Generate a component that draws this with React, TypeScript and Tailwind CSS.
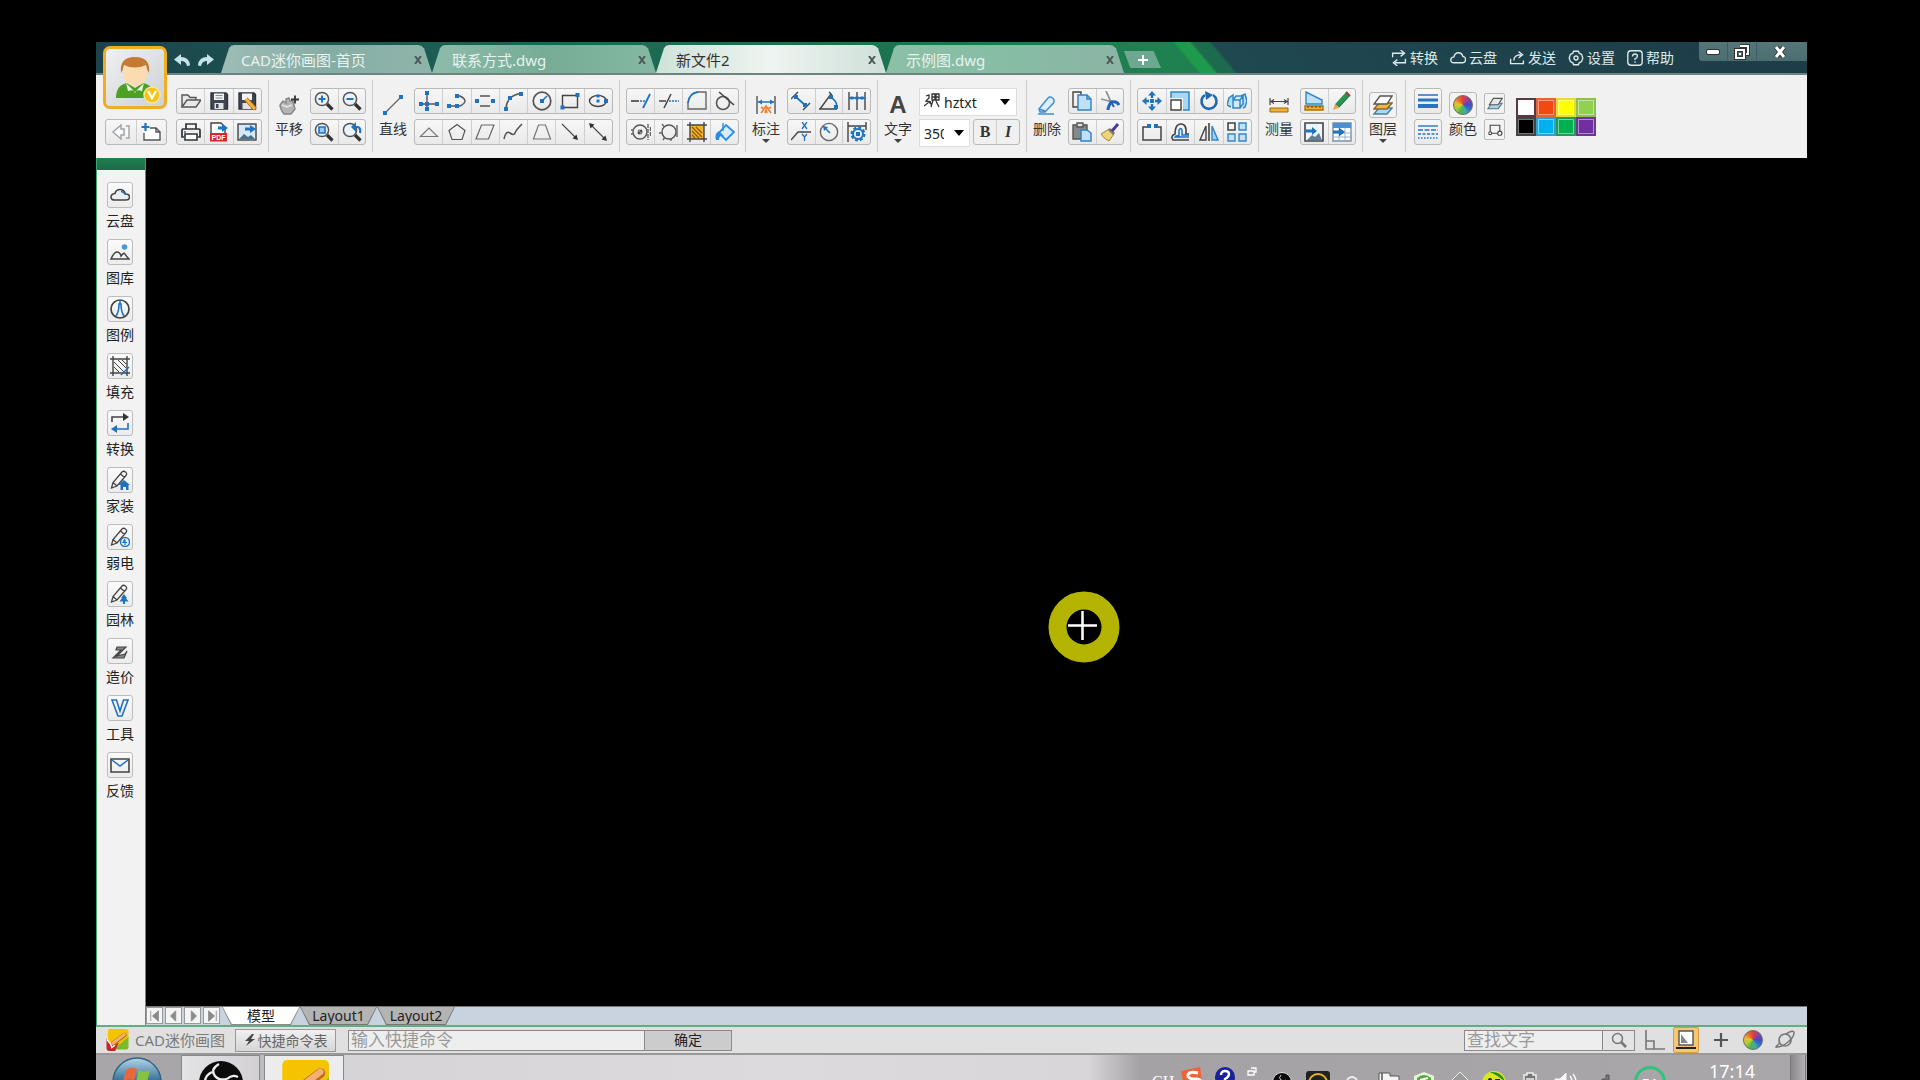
import React from 'react';

/* ==========================================================================
   Drawing editor window
   Title bar with file tabs, ribbon, side bar, canvas, status bar and taskbar
   ========================================================================== */

const BLUE = '#1f72c0';
const DARK = '#444444';

type Children = { children?: React.ReactNode };

function Ico({ children, className = 'w-5 h-5' }: Children & { className?: string }) {
  return (
    <svg className={`${className} shrink-0`} viewBox="0 0 20 20" fill="none" stroke={DARK} strokeWidth={1.4} aria-hidden="true">
      {children}
    </svg>
  );
}

// Square grip drawn at the ends of the geometry icons
function Dot({ x, y, s = 4 }: { x: number; y: number; s?: number }) {
  return <rect x={x - s / 2} y={y - s / 2} width={s} height={s} fill={BLUE} stroke="none" />;
}

function ColorWheel({ className = 'w-5 h-5' }: { className?: string }) {
  return (
    <span
      className={`${className} block rounded-full border border-[#6b6b6b] bg-[conic-gradient(#e0403a,#a03a9c,#4a4ab8,#2f6ad0,#3fb0a0,#4cb648,#a8cc3c,#f0c030,#e0702c,#e0403a)]`}
    />
  );
}

// ==========================================================================
// Icons
// ==========================================================================

const magnifier = (
  <>
    <path d="M13 13l5.5 5.5" stroke="#333" strokeWidth={3.2} />
    <circle cx="8" cy="8" r="6.6" fill="#eaf3fb" stroke="#555" strokeWidth={1.5} />
  </>
);

const pencil = <path d="M1.5 18l1.5-5.500L12 2q1.500-1.500 3.500 0t.5 3.500L7 16zM3 12.500L7 16M10.500 4l4 3.500" strokeWidth={1.3} />;

const frameHatch = (
  <>
    <rect x="3" y="3" width="14" height="14" fill="#f2b32c" stroke="none" />
    <path d="M5 9l7 7M5 5l10 10M9 5l6 6M5 13l3 3" stroke="#8a5c00" strokeWidth={1.2} />
    <path d="M3 0v20M17 0v20M0 3h20M0 17h20" strokeWidth={1.4} />
  </>
);

const icons = {
  back: <path d="M10 3L2 10l8 7v-4h3V7h-3zM15 4h3v12h-3" stroke="#9aa2a8" fill="#fafafa" />,
  newFile: (
    <>
      <path d="M9 6h6l4 4v8H3v-7M15 6v4h4" stroke="#555" fill="#fff" />
      <path d="M4.5 1v8M.5 5h8" stroke={BLUE} strokeWidth={2.2} />
    </>
  ),
  open: <path d="M1 16V4h6l2 2.5h6V9M1 16l5-7h14l-5 7z" stroke="#555" fill="#e6e8ea" />,
  save: (
    <>
      <path d="M2 2h15l1.5 1.5V18H2z" fill="#3f4650" stroke="#30353d" />
      <path d="M5 2.5h10V9H5z" fill="#f4f4f4" stroke="none" />
      <path d="M6.5 4.5h7M6.5 7h7" stroke="#888" strokeWidth={1} />
      <path d="M5.5 12h9v6h-9z" fill="#dfe3e6" stroke="none" />
      <path d="M7 13h2.5v4H7z" fill="#3f4650" stroke="none" />
    </>
  ),
  saveAs: (
    <>
      <path d="M2 2h15l1.5 1.5V18H2z" fill="#3f4650" stroke="#30353d" />
      <path d="M5 2.5h10V9H5z" fill="#f4f4f4" stroke="none" />
      <path d="M5.5 12h9v6h-9z" fill="#dfe3e6" stroke="none" />
      <path d="M9 8l9 10" stroke="#b66b1c" strokeWidth={4.5} />
      <path d="M9 8l9 10" stroke="#f5b43c" strokeWidth={2.8} />
    </>
  ),
  print: (
    <>
      <path d="M5 7V2h10v5M3 15H1V8q0-1 1-1h16q1 0 1 1v7h-2" strokeWidth={1.7} stroke="#333" />
      <path d="M4 12h12v6H4z" fill="#fff" stroke="#333" strokeWidth={1.6} />
      <path d="M3 10h2" stroke={BLUE} />
    </>
  ),
  pdf: (
    <>
      <path d="M2 11V1h10l4 4v6" fill="#fff" />
      <path d="M9 6h5" stroke={BLUE} strokeWidth={3} />
      <path d="M13 2l6 4-6 4z" fill={BLUE} stroke="none" />
      <rect x="1" y="11" width="17" height="8.5" fill="#d9262c" stroke="none" />
      <text x="9.5" y="18" textAnchor="middle" fill="#fff" stroke="none" fontSize="7" fontWeight="700" fontFamily="Liberation Sans, sans-serif">PDF</text>
    </>
  ),
  image: (
    <>
      <rect x="1" y="2" width="18" height="16" fill="#d6e8f6" />
      <path d="M2 17l5-5 4 3 3-2 4 4z" fill="#4a6f90" stroke="none" />
      <path d="M8 7h6" stroke={BLUE} strokeWidth={3} />
      <path d="M13 3l6 4-6 4z" fill={BLUE} stroke="none" />
    </>
  ),
  pan: (
    <>
      <path d="M5 19q-4-5-4-9l3-4 3 2V4l3-1 1 3 3 0 1 4 1 4-4 5z" fill="#b4b4b4" stroke="#868686" />
      <path d="M3 10l5 2 5-2" stroke="#e6e6e6" />
      <path d="M16 .5v8M12 4.5h8" stroke="#333" strokeWidth={1.8} />
    </>
  ),
  zoomIn: <>{magnifier}<path d="M8 4.5v7M4.5 8h7" stroke={BLUE} strokeWidth={2} /></>,
  zoomOut: <>{magnifier}<path d="M4.5 8h7" stroke={BLUE} strokeWidth={2} /></>,
  zoomWindow: <>{magnifier}<path d="M5 5h6v6H5z" stroke={BLUE} fill="#9dcbf0" strokeWidth={1.6} /></>,
  zoomPrev: (
    <>
      {magnifier}
      <path d="M13 5h3q3 1 2 6" stroke={BLUE} strokeWidth={2.2} />
      <path d="M14 0v10L9 5z" fill={BLUE} stroke="none" />
    </>
  ),
  line: <><path d="M2 18L18 2" stroke="#666" strokeWidth={1.2} /><Dot x={2} y={18} /><Dot x={18} y={2} /></>,
  cross: <><path d="M8 1v18M1 13h18" stroke="#555" /><Dot x={8} y={2} /><Dot x={2} y={13} /><Dot x={8} y={13} /><Dot x={8} y={18} /><Dot x={18} y={13} /></>,
  polyline: <><path d="M2 15h11q10-5 0-10H10" stroke="#555" /><Dot x={2} y={15} /><Dot x={10} y={15} /><Dot x={10} y={5} /></>,
  doubleLine: <><path d="M5 5h10M5 15h10" stroke="#555" /><Dot x={2} y={10} /><Dot x={18} y={10} /></>,
  arc: <><path d="M3 17Q4 5 17 2.5" stroke="#555" /><Dot x={3} y={18} /><Dot x={7} y={7} /><Dot x={18} y={3} /></>,
  circle: <><circle cx="10" cy="10" r="8.8" stroke="#555" strokeWidth={1.7} /><path d="M10 10l5-5" stroke={BLUE} strokeWidth={1.6} /><Dot x={10} y={10} /></>,
  rect: <><path d="M2.5 4.5h15v12h-15z" stroke="#444" /><Dot x={17.5} y={4} /><Dot x={2.5} y={16.5} /></>,
  ellipse: <><ellipse cx="10" cy="10" rx="8.5" ry="5.5" /><Dot x={10} y={5} s={3} /><Dot x={10} y={10} s={3} /><Dot x={18} y={10} /></>,
  triangle: <path d="M1.5 14.5L10 6l8.5 8.5z" stroke="#777" strokeWidth={1.2} />,
  pentagon: <path d="M10 2.5l8 6-3 9H5l-3-9z" stroke="#555" strokeWidth={1.2} />,
  parallelogram: <path d="M6.5 3H19l-5.5 14H1z" stroke="#666" strokeWidth={1.2} />,
  spline: <path d="M1 17q2-9 6-6t5 0T19 2" stroke="#555" strokeWidth={1.6} />,
  trapezoid: <path d="M6.5 3h7l5 14h-17z" stroke="#777" strokeWidth={1.2} />,
  arrow: <><path d="M2 2l14 14" strokeWidth={1.1} /><path d="M18 18l-1.5-5.5-4 4z" fill="#333" stroke="none" /></>,
  doubleArrow: <><path d="M3 3l14 14" strokeWidth={1.1} /><path d="M1 1l5.5 1.5-4 4zM19 19l-1.5-5.5-4 4z" fill="#333" stroke="none" /></>,
  extend: <><path d="M0 10h8" strokeWidth={1.6} /><path d="M9 10h6" stroke={BLUE} strokeDasharray="2 1" /><path d="M12 17l7-14" stroke={BLUE} strokeWidth={1.8} /></>,
  trim: <><path d="M0 10h7M5 17l7-14" strokeWidth={1.5} /><path d="M10 10h10" stroke={BLUE} strokeDasharray="2 1" /></>,
  fillet: <><path d="M10 1h9v17H1v-7" stroke="#666" /><path d="M1 12Q2 2 11 1" stroke={BLUE} strokeWidth={1.8} /></>,
  tangent: <><circle cx="8" cy="12" r="6.5" strokeWidth={1.6} stroke="#555" /><path d="M4 1l15 13" strokeWidth={1.6} /></>,
  circleCenter: (
    <>
      <circle cx="9" cy="10" r="7" stroke="#555" />
      <path d="M17 2v16M19.500 5v10M0 8h3M0 12h3" strokeDasharray="4 1" stroke="#666" />
      <path d="M7 12l4-4" />
      <circle cx="9" cy="10" r="2" strokeWidth={1} />
    </>
  ),
  circleTangent: <><circle cx="10" cy="10" r="7" stroke="#555" /><path d="M3 2l2.5 3M0 11h3M18 3v12M4 18l2-3M12 19v-2" stroke="#666" /></>,
  hatch: frameHatch,
  bucket: (
    <>
      <path d="M11 3l8 7-8 8-7-7z" fill="#d4ecfb" stroke="#2b8be0" strokeWidth={1.8} />
      <path d="M1 18q-2-6 3-9l5 5q-5-1-5 4z" fill="#2b8be0" stroke="none" />
      <path d="M8 1v8" stroke="#2b8be0" />
    </>
  ),
  dimension: (
    <>
      <path d="M1 1v18M19 1v18" stroke="#666" strokeWidth={1.6} />
      <path d="M2 7h16" stroke={BLUE} strokeWidth={1.5} />
      <path d="M2 7l4-2.5v5zM18 7l-4-2.5v5z" fill={BLUE} stroke="none" />
      <path d="M5 18l3-4 2-3 2 3 3 4M9 18l1-3 1 3M5 12l3 2M15 12l-3 2" stroke="#f08030" strokeWidth={1.7} />
    </>
  ),
  dimAligned: <><path d="M0 8l7-7M12 19l7-7" /><path d="M5 6l9 8" stroke={BLUE} strokeWidth={1.8} /><Dot x={5} y={6} /><Dot x={14} y={14} /></>,
  dimAngle: <><path d="M0 18h18M1 18L12 3M10 1l3 3" /><path d="M11 6q7 3 7 11" stroke={BLUE} strokeWidth={1.6} /><Dot x={12} y={6} /><Dot x={17} y={16} /></>,
  dimContinue: <><path d="M2 1v18M10 1v18M18 1v18" /><path d="M2 7h16" stroke={BLUE} strokeWidth={1.8} /><Dot x={5} y={7} s={3} /><Dot x={10} y={7} s={3} /><Dot x={15} y={7} s={3} /></>,
  dimXY: (
    <>
      <path d="M0 18l7-8h13" />
      <path d="M11 0l5 7M16 0l-5 7M11 12l2.5 3L16 12M13.5 15v4" stroke={BLUE} strokeWidth={1.3} />
    </>
  ),
  dimRadius: <><circle cx="10" cy="10" r="8.6" stroke="#666" /><path d="M6 6l5 5" stroke={BLUE} strokeWidth={1.6} /><path d="M4 4l5 1-4 4z" fill={BLUE} stroke="none" /></>,
  dimStyle: (
    <>
      <path d="M1 0v20M19 0v8M1 4h18" />
      <circle cx="11" cy="12" r="6.5" stroke={BLUE} strokeWidth={2} strokeDasharray="3 2" />
      <circle cx="11" cy="12" r="5" fill="#e6f2fb" stroke={BLUE} strokeWidth={2} />
      <Dot x={11} y={12} />
    </>
  ),
  eraser: <path d="M2 14L11 3q2-2 4.5 0t1 5L8 17H3zM2 14l6 2M1 19h16" stroke="#3c8ed4" fill="#dceefb" strokeWidth={1.5} />,
  copy: (
    <>
      <path d="M7 16H1V1h8v3" />
      <path d="M6 4h9l4 4v11H6z" fill="#bfe0f8" stroke="#2f80c4" />
      <path d="M15 4v4h4" stroke="#2f80c4" />
    </>
  ),
  cut: (
    <>
      <path d="M6 0l5 11M1 8l12 3" stroke="#8d9299" strokeWidth={1.8} />
      <path d="M8 19q0-3 3-8 6-1 8 3" stroke="#2563b4" strokeWidth={3} />
      <path d="M11 11l3 5" stroke="#2563b4" strokeWidth={2} />
    </>
  ),
  paste: (
    <>
      <path d="M1 3h14v14H1z" fill="#8a8a8a" stroke="#555" />
      <path d="M5 1h6v4H5z" fill="#ddd" stroke="#555" />
      <path d="M9 8h6l4 3v8H9z" fill="#bfe0f8" stroke="#2f80c4" />
    </>
  ),
  brush: (
    <>
      <path d="M1 12l8-5 5 5-5 7q-5-2-8-7z" fill="#efd57a" stroke="#a88a30" strokeWidth={1} />
      <path d="M9 7l5 5" stroke="#777" strokeWidth={3} />
      <path d="M12 9l6-7" stroke="#4c3c92" strokeWidth={3} />
    </>
  ),
  move: (
    <>
      <path d="M10 4v3M10 13v3M4 10h3M13 10h3" stroke={BLUE} strokeWidth={2.4} />
      <path d="M10 0l4 4.500H6zM10 20l4-4.500H6zM0 10l4.500-4v8zM20 10l-4.500-4v8z" fill={BLUE} stroke="none" />
      <Dot x={10} y={10} />
    </>
  ),
  scale: (
    <>
      <path d="M1 1h18v18h-6V7H1z" fill="#a9d6f0" stroke="none" />
      <path d="M1 7V1h18v18h-6" stroke="#2f86c8" strokeWidth={1.5} />
      <path d="M1 9h10v10H1z" fill="#fff" />
    </>
  ),
  rotate: <><path d="M6 4a7.5 7.5 0 1 0 8 0" stroke="#2068b4" strokeWidth={2.6} /><path d="M6 0l8 4-7 5z" fill="#2068b4" stroke="none" /></>,
  copyRotate: (
    <>
      <path d="M4 16l-4-2 2-7 4-3v4M14 5l4-2 2 7-2 6-2 1" stroke="#2f86c8" fill="#b9def5" strokeWidth={1.5} />
      <path d="M6 9h7v8H6zM6 9l3-4h7l-3 4M13 17l3-4V5" stroke="#2f86c8" fill="#d4ebfa" strokeWidth={1.5} />
    </>
  ),
  breakLine: <><path d="M6 5H1v13h18V5h-5" strokeWidth={1.5} /><Dot x={7} y={4} /><Dot x={14} y={4} /></>,
  offset: (
    <>
      <path d="M19 18H3q-3-4 2-6 0-10 6-10t5 10h3" strokeWidth={1.7} />
      <path d="M19 15H5q1-2 4-1V8q2-3 3 0v5h7" stroke={BLUE} strokeWidth={1.5} />
    </>
  ),
  mirror: <><path d="M7 4v14H1z" /><path d="M10 1v18" strokeWidth={1.6} /><path d="M13 4v14h6z" fill="#9ed2f2" stroke="#2f86c8" /></>,
  array: <><path d="M1 1h7v7H1z" strokeWidth={1.6} /><path d="M12 1h7v7h-7zM1 12h7v7H1zM12 12h7v7h-7z" fill="#c4e2f6" stroke="#2f86c8" /></>,
  measure: (
    <>
      <path d="M1 3v7M19 3v7M1 6.500h18M5 4.500L2 6.500l3 2M15 4.500l3 2-3 2" strokeWidth={1.2} />
      <path d="M1 13h18v4H1z" fill="#f0b030" stroke="#9a6a10" strokeWidth={1} />
    </>
  ),
  area: (
    <>
      <path d="M2 13V1l16 8v4z" fill="#bfe0f8" stroke="#2f86c8" />
      <path d="M1 15h18v4H1z" fill="#f5b030" stroke="#a87008" />
      <path d="M4 15v2M8 15v2M12 15v2M16 15v2" strokeWidth={1} />
    </>
  ),
  greenPencil: (
    <>
      <path d="M5 15L16 3" stroke="#2c9250" strokeWidth={5.5} />
      <path d="M7 16L18 4" stroke="#1e6e3c" strokeWidth={1} />
      <path d="M1 19l2-6 4 4z" fill="#f0a050" stroke="none" />
      <path d="M14 1l4 4" stroke="#a63a3a" strokeWidth={2} />
    </>
  ),
  exportImage: (
    <>
      <path d="M1 1h18v18H1z" fill="#eef5fb" strokeWidth={1.6} />
      <path d="M3 18l5-5 3 2 4-4 3 7z" fill="#5f7f98" stroke="none" />
      <path d="M2 9h6" stroke={BLUE} strokeWidth={3} />
      <path d="M8 5l5 4-5 4z" fill={BLUE} stroke="none" />
    </>
  ),
  exportTable: (
    <>
      <path d="M1 1h18v18H1z" fill="#fff" stroke="#7d8fa4" />
      <path d="M1 1h18v5H1z" fill="#4a90d4" stroke="none" />
      <path d="M1 11h18M1 15h18M7 6v13M13 6v13" stroke="#9ab2cc" strokeWidth={1} />
      <path d="M1 10h7" stroke={BLUE} strokeWidth={3} />
      <path d="M7 5.500l6 4.500-6 4.500z" fill={BLUE} stroke="none" />
    </>
  ),
  layers: (
    <>
      <path d="M6 13h13l-5 6H1z" fill="#a8dcf4" stroke="#4f7f98" />
      <path d="M6 8h13l-5 6H1z" fill="#f2b838" stroke="#8a6a20" />
      <path d="M7 1h12l-5 8H1z" fill="#fff" stroke="#555" />
    </>
  ),
  layersSmall: (
    <>
      <path d="M6 9h13l-5 7H1z" fill="#a9d2e6" stroke="#54788c" />
      <path d="M8 3h11l-5 8H3z" fill="#e8e8e8" stroke="#555" />
    </>
  ),
  lineWidth: <><path d="M0 4h20" stroke="#2475c4" strokeWidth={1.5} /><path d="M0 9h20" stroke="#2475c4" strokeWidth={3} /><path d="M0 15h20" stroke="#2475c4" strokeWidth={4} /></>,
  lineType: (
    <>
      <path d="M0 4h20" stroke="#2475c4" />
      <path d="M0 8h20" stroke="#2475c4" strokeDasharray="5 1.5" />
      <path d="M0 12h20" stroke="#2475c4" strokeDasharray="3 1.5" />
      <path d="M0 16h20" stroke="#2475c4" strokeDasharray="1.5 1.5" />
    </>
  ),
  linkShape: <><path d="M4 13V4h12v8M6 14h7" /><circle cx="4" cy="14" r="1.8" fill="#fff" /><circle cx="16" cy="14" r="2.6" fill="#fff" /></>,
  cloud: <><path d="M5 15q-4 0-4-3t4-3.500q1-4 5-4T15.500 9q4 0 4 3T16 15z" fill="#eceff1" strokeWidth={1.6} /><path d="M11 6.500q3 0 4 3" stroke={BLUE} /></>,
  gallery: <><path d="M1 17q3-7 6-7t4 4q3-4 4-2t4 5z" strokeWidth={1.5} /><circle cx="14.5" cy="5" r="2.8" fill="#4f94d4" stroke="none" /></>,
  compass: <><circle cx="10" cy="10" r="9" strokeWidth={1.7} /><path d="M10 1v4M6 17q3-4 3-12h2q0 8 3 12" stroke={BLUE} strokeWidth={1.6} /></>,
  fillArea: <><path d="M3 0v20M17 0v20M0 3h20M0 17h20" /><path d="M4 6l10 10M8 4l8 8M4 11l5 5M12 4l4 4" strokeWidth={1} /><path d="M11 19l8-8" stroke={BLUE} strokeWidth={1.4} /></>,
  convert: (
    <>
      <path d="M2 9V4h12" strokeWidth={1.6} />
      <path d="M13 0l6 4-6 4z" fill="#333" stroke="none" />
      <path d="M18 10v6H6" stroke={BLUE} strokeWidth={1.6} />
      <path d="M7 12l-6 4 6 4z" fill={BLUE} stroke="none" />
    </>
  ),
  house: <>{pencil}<path d="M8 15l6-5 6 5h-1.5V20H16v-3h-3v3h-2.500v-5z" fill={BLUE} stroke="none" /></>,
  electric: <>{pencil}<circle cx="15" cy="15" r="4.5" fill="#eaf3fb" stroke={BLUE} /><path d="M15 12l-2 3.500h4M15 13v5" stroke={BLUE} strokeWidth={1.2} /></>,
  tree: <>{pencil}<path d="M14 10l3 4h-1l2.500 3.500H15V20h-2v-2.500H9.500L12 14h-1z" fill={BLUE} stroke="none" /></>,
  cost: <path d="M7 6h9l-9 9 8-2 2-3-3 7H3l8-8H6z" fill="#888" stroke="#444" strokeWidth={1.2} />,
  tools: <path d="M2 2h4.500L10 13l3.500-11H18l-6 16H8z" stroke={BLUE} strokeWidth={1.6} />,
  mail: <><path d="M1 4h18v13H1z" strokeWidth={1.6} /><path d="M2 5l8 6 8-6" stroke={BLUE} strokeWidth={1.5} /></>,
};

type IconName = keyof typeof icons;
type Tool = { icon: IconName; label: string };

// ==========================================================================
// Ribbon pieces
// ==========================================================================

function Row({ tools, className = '' }: { tools: Tool[]; className?: string }) {
  return (
    <div className={`flex h-[26px] rounded-[3px] border border-[#b9b9b9] bg-linear-to-b from-[#f7f7f7] to-[#e9e9e9] divide-x divide-[#cfcfcf] ${className}`}>
      {tools.map((tool) => (
        <button key={tool.label} aria-label={tool.label} className="flex flex-1 items-center justify-center">
          <Ico>{icons[tool.icon]}</Ico>
        </button>
      ))}
    </div>
  );
}

function Rows({ top, bottom, className = '' }: { top: Tool[]; bottom: Tool[]; className?: string }) {
  return (
    <div className={`flex flex-col gap-[5px] ${className}`}>
      <Row tools={top} />
      <Row tools={bottom} />
    </div>
  );
}

function Section({ children, last = false }: Children & { last?: boolean }) {
  return (
    <div className={`flex h-[72px] shrink-0 gap-[5px] px-1.5 pt-2 ${last ? '' : 'border-r border-[#cccccc]'}`}>{children}</div>
  );
}

function BigTool({ label, children, arrow = false, boxed = false }: Children & { label: string; arrow?: boolean; boxed?: boolean }) {
  return (
    <button className="mr-0.5 flex w-7 shrink-0 flex-col items-center pt-1 text-[14px] leading-4 text-[#333]">
      <span className={`flex h-[26px] w-7 items-center justify-center ${boxed ? 'rounded-[3px] border border-[#b9b9b9] bg-[#f3f3f3]' : ''}`}>
        {children}
      </span>
      <span className="mt-[3px] whitespace-nowrap">{label}</span>
      {arrow && <span className="mt-0.5 border-x-4 border-t-4 border-x-transparent border-t-[#444]" />}
    </button>
  );
}

const t = (icon: IconName, label: string): Tool => ({ icon, label });

const swatches = [
  { name: '白', tone: 'bg-white border-[#5a3a42]' },
  { name: '红', tone: 'bg-[#f04a10] border-[#e8613a]' },
  { name: '黄', tone: 'bg-[#ffff00] border-[#e8dc30]' },
  { name: '浅绿', tone: 'bg-[#92d050] border-[#8cc152]' },
  { name: '黑', tone: 'bg-black border-[#444444]' },
  { name: '蓝', tone: 'bg-[#00b0f0] border-[#2f9fd0]' },
  { name: '绿', tone: 'bg-[#00b050] border-[#249a58]' },
  { name: '紫', tone: 'bg-[#7030a0] border-[#6b3a90]' },
];

function Ribbon() {
  return (
    <div className="flex h-[83px] shrink-0 overflow-hidden bg-[#f1f1f1] pt-[5px] pl-[3px]">
      <Section>
        <div className="mr-1 w-[62px] pt-[31px]">
          <Row tools={[t('back', '后退'), t('newFile', '新建')]} />
        </div>
        <Rows
          className="w-[86px]"
          top={[t('open', '打开'), t('save', '保存'), t('saveAs', '另存为')]}
          bottom={[t('print', '打印'), t('pdf', '导出PDF'), t('image', '导出图片')]}
        />
      </Section>
      <Section>
        <BigTool label="平移"><Ico>{icons.pan}</Ico></BigTool>
        <Rows
          className="w-14"
          top={[t('zoomIn', '放大'), t('zoomOut', '缩小')]}
          bottom={[t('zoomWindow', '窗口缩放'), t('zoomPrev', '上一视图')]}
        />
      </Section>
      <Section>
        <BigTool label="直线"><Ico>{icons.line}</Ico></BigTool>
        <Rows
          className="w-[199px]"
          top={[t('cross', '构造线'), t('polyline', '多段线'), t('doubleLine', '双线'), t('arc', '圆弧'), t('circle', '圆'), t('rect', '矩形'), t('ellipse', '椭圆')]}
          bottom={[t('triangle', '三角形'), t('pentagon', '多边形'), t('parallelogram', '平行四边形'), t('spline', '样条曲线'), t('trapezoid', '梯形'), t('arrow', '箭头'), t('doubleArrow', '双箭头')]}
        />
      </Section>
      <Section>
        <Rows
          className="w-[113px]"
          top={[t('extend', '延伸'), t('trim', '修剪'), t('fillet', '圆角'), t('tangent', '切线')]}
          bottom={[t('circleCenter', '圆心标记'), t('circleTangent', '相切圆'), t('hatch', '图案填充'), t('bucket', '颜色填充')]}
        />
      </Section>
      <Section>
        <BigTool label="标注" arrow><Ico>{icons.dimension}</Ico></BigTool>
        <Rows
          className="w-[84px]"
          top={[t('dimAligned', '对齐标注'), t('dimAngle', '角度标注'), t('dimContinue', '连续标注')]}
          bottom={[t('dimXY', '坐标标注'), t('dimRadius', '半径标注'), t('dimStyle', '标注设置')]}
        />
      </Section>
      <Section>
        <BigTool label="文字" arrow>
          <span className="font-['Liberation_Sans',sans-serif] text-[24px] leading-6 font-bold text-[#444]">A</span>
        </BigTool>
        <div className="flex w-[101px] flex-col gap-[3px]">
          <div className="relative h-7 w-[98px] border border-[#dddddd] bg-white">
            <select aria-label="字体" defaultValue="hztxt" className="h-full w-full appearance-none pl-6 text-[14px] text-[#222]">
              <option>hztxt</option>
            </select>
            <svg className="pointer-events-none absolute top-1 left-1 h-4 w-4" viewBox="0 0 16 16" fill="none" stroke="#333" strokeWidth={1.3} aria-hidden="true">
              <path d="M2 3l3-1v3L2 8l5 1M0 13l5-4 3 3M8 1h3v6H8zM12 1h3v6h-3zM8 4h7M9 7l-2 7M12 8l3 6" />
            </svg>
            <span className="pointer-events-none absolute top-2.5 right-1.5 border-x-[5px] border-t-[6px] border-x-transparent border-t-black" />
          </div>
          <div className="flex gap-[3px]">
            <div className="flex h-7 w-[51px] items-center border border-[#dddddd] bg-white pl-1">
              <input aria-label="字高" defaultValue="350" className="w-5 text-[14px] text-[#222] outline-none" />
              <button aria-label="选择字高" className="ml-2.5 border-x-[5px] border-t-[6px] border-x-transparent border-t-black" />
            </div>
            <div className="flex h-[26px] w-[47px] divide-x divide-[#cfcfcf] rounded-[3px] border border-[#b9b9b9] bg-[#f0f0f0] font-['Liberation_Serif',serif] text-[16px] font-bold text-[#333]">
              <button className="flex-1">B</button>
              <button className="flex-1 italic">I</button>
            </div>
          </div>
        </div>
      </Section>
      <Section>
        <BigTool label="删除"><Ico>{icons.eraser}</Ico></BigTool>
        <Rows className="w-14" top={[t('copy', '复制'), t('cut', '剪切')]} bottom={[t('paste', '粘贴'), t('brush', '格式刷')]} />
      </Section>
      <Section>
        <Rows
          className="w-[115px]"
          top={[t('move', '移动'), t('scale', '缩放'), t('rotate', '旋转'), t('copyRotate', '复制旋转')]}
          bottom={[t('breakLine', '打断'), t('offset', '偏移'), t('mirror', '镜像'), t('array', '阵列')]}
        />
      </Section>
      <Section>
        <BigTool label="测量"><Ico>{icons.measure}</Ico></BigTool>
        <Rows
          className="w-14"
          top={[t('area', '面积'), t('greenPencil', '批注')]}
          bottom={[t('exportImage', '测量导出图片'), t('exportTable', '测量导出表格')]}
        />
      </Section>
      <Section>
        <BigTool label="图层" arrow boxed><Ico>{icons.layers}</Ico></BigTool>
      </Section>
      <Section last>
        <Rows className="mr-0.5 ml-0.5 w-7" top={[t('lineWidth', '线宽')]} bottom={[t('lineType', '线型')]} />
        <BigTool label="颜色" boxed><ColorWheel /></BigTool>
        <div className="flex flex-col gap-[5px] pt-[5px]">
          <button aria-label="图层颜色" className="flex h-[21px] w-[21px] items-center justify-center rounded-[2px] border border-[#b9b9b9] bg-[#f3f3f3]">
            <Ico className="h-4 w-4">{icons.layersSmall}</Ico>
          </button>
          <button aria-label="对象颜色" className="flex h-[21px] w-[21px] items-center justify-center rounded-[2px] border border-[#b9b9b9] bg-[#f3f3f3]">
            <Ico className="h-4 w-4">{icons.linkShape}</Ico>
          </button>
        </div>
        <div className="ml-1.5 grid grid-cols-4 self-start pt-2.5">
          {swatches.map((c) => (
            <button key={c.name} aria-label={c.name} className={`h-[19px] w-5 border-2 shadow-[inset_0_0_0_1px_rgba(255,255,255,0.45)] ${c.tone}`} />
          ))}
        </div>
      </Section>
    </div>
  );
}

// ==========================================================================
// Title bar
// ==========================================================================

const tabs = [
  { name: 'CAD迷你画图-首页', width: 'w-[211px]', tone: 'from-[#9dbcb5] via-[#86ada4] to-[#8fb5ab] text-[#e8f2ef]' },
  { name: '联系方式.dwg', width: 'w-[224px]', tone: 'from-[#8ebcab] via-[#76ac96] to-[#84b8a2] text-[#e8f2ef]' },
  { name: '新文件2', width: 'w-[230px]', tone: 'from-[#cfe3da] via-[#eef4f1] to-[#cfe0d9] text-[#333333]' },
  { name: '示例图.dwg', width: 'w-[238px]', tone: 'from-[#8cc0a6] via-[#86bda4] to-[#8cb4a6] text-[#e8f2ef]' },
];

const menu = [
  { label: '转换', icon: <path d="M2 9V4h13M12 0l5 4-5 4M18 11v5H5M8 12l-5 4 5 4" /> },
  { label: '云盘', icon: <path d="M5 16q-4 0-4-3.5t4-4q1-5 5.5-5T16 8q3.5.5 3.5 4T16 16z" /> },
  { label: '发送', icon: <path d="M2 11v6h16v-4M6 13q0-7 9-7M12 2l5 4-5 4" /> },
  { label: '设置', icon: <><path d="M7 1.5h6l1 2.5 3 1.5 1.5 4.5L17 14.5 14 16l-1 2.5H7L6 16l-3-1.5L1.5 10 3 5.5 6 4z" /><circle cx="10" cy="10" r="2.5" /></> },
  { label: '帮助', icon: <><rect x="1" y="1" width="18" height="18" rx="4" /><path d="M7 8q0-3 3-3t3 2.5-3 3.5v1.5M10 14v2" /></> },
];

function TitleBar() {
  return (
    <header className="relative flex h-[33px] shrink-0 border-b-2 border-[#6d8580] bg-[linear-gradient(50deg,transparent_0_844px,#1e9a4c_847px_857px,#1c6b4c_860px_872px,#1f4850_875px,#1d3c47_100%),linear-gradient(90deg,#1c424b_0%,#1b5450_12%,#1c6a55_30%,#1b7350_45%,#1f8050_62%,#1f7450_100%)]">
      <button aria-label="账户" className="absolute top-1 left-[7px] z-10 h-[63px] w-16 rounded-[7px] border-[3px] border-[#f0ac22] bg-linear-to-br from-[#f0f0f0] to-[#cdd2d6]">
        <svg viewBox="0 0 58 57" className="h-full w-full" aria-hidden="true">
          <path d="M10 49q0-13 11-15l8 5 8-5q11 2 11 15z" fill="#4da024" />
          <path d="M20 34l9 9 9-9-2 8-5-1-2 3-2-3-5 1z" fill="#e8f4e0" />
          <ellipse cx="29" cy="24" rx="12" ry="13" fill="#fbdcb0" />
          <path d="M15 24q-2-16 14-16t14 16q-2-3-3-8-11 5-22 0-1 5-3 8z" fill="#c47a30" />
          <circle cx="46" cy="46" r="8" fill="#f4c41c" stroke="#fae690" strokeWidth="1.5" />
          <path d="M42 42l4 7 4-7" fill="none" stroke="#fff" strokeWidth="2.2" />
        </svg>
      </button>
      <div className="flex w-[125px] shrink-0 items-center gap-2 pt-1 pl-[78px] text-[#c4e4ea]">
        <button aria-label="撤销">
          <svg className="h-4 w-4" viewBox="0 0 16 16" fill="currentColor" aria-hidden="true"><path d="M7 2L0 7.500 7 13v-4q5 0 6 5 3 0 3-1Q15 5 7 5z" /></svg>
        </button>
        <button aria-label="重做">
          <svg className="h-4 w-4" viewBox="0 0 16 16" fill="currentColor" aria-hidden="true"><path d="M9 2l7 5.500L9 13v-4q-5 0-6 5-3 0-3-1Q1 5 9 5z" /></svg>
        </button>
      </div>
      <nav className="flex items-end">
        {tabs.map((tab) => (
          <div
            key={tab.name}
            className={`flex h-7 items-center justify-between bg-linear-to-r pt-0.5 pr-2.5 pl-5 text-[15px] [clip-path:polygon(0_100%,8px_12%,10px_3%,13px_0,calc(100%-14px)_0,calc(100%-11px)_3%,calc(100%-8px)_12%,100%_100%)] ${tab.width} ${tab.tone}`}
          >
            <button>{tab.name}</button>
            <button aria-label="关闭标签">
              <svg className="h-2 w-2" viewBox="0 0 8 8" stroke="#4e5a58" strokeWidth={2} aria-hidden="true"><path d="M1 0l6 8M7 0L1 8" /></svg>
            </button>
          </div>
        ))}
        <button aria-label="新建标签" className="mb-[5px] flex h-[17px] w-[37px] items-center justify-center bg-[#6fa890] [clip-path:polygon(0_0,80%_0,100%_100%,17%_100%)]">
          <svg className="h-2.5 w-2.5" viewBox="0 0 10 10" stroke="#fff" strokeWidth={2} aria-hidden="true"><path d="M5 0v10M0 5h10" /></svg>
        </button>
      </nav>
      <nav className="ml-auto flex items-center gap-3 pr-[25px] text-[14px] text-[#dde9ea]">
        {menu.map((m) => (
          <button key={m.label} className="flex items-center gap-[3px] whitespace-nowrap">
            <svg className="h-4 w-4" viewBox="0 0 20 20" fill="none" stroke="currentColor" strokeWidth={1.7} aria-hidden="true">{m.icon}</svg>
            {m.label}
          </button>
        ))}
      </nav>
      <div className="flex h-[19px] divide-x divide-[#3c5f64] rounded-bl-[3px] bg-linear-to-b from-[#55777a] to-[#4b6d70]">
        <button aria-label="最小化" className="flex w-[29px] items-center justify-center">
          <span className="h-1 w-3 rounded-[1px] bg-white outline outline-[#333]" />
        </button>
        <button aria-label="还原" className="flex w-[29px] items-center justify-center">
          <svg className="h-4 w-4" viewBox="0 0 16 16" fill="none" aria-hidden="true">
            <path d="M6 2h8v8h-3M2 6h8v8H2z" stroke="#333" strokeWidth="4" />
            <path d="M6 2h8v8h-2M2 6h8v8H2z" stroke="#fff" strokeWidth="2" />
            <path d="M5 9h2v2H5z" fill="#fff" />
          </svg>
        </button>
        <button aria-label="关闭" className="flex w-[50px] items-center justify-center pr-1">
          <svg className="h-3 w-3" viewBox="0 0 12 12" aria-hidden="true">
            <path d="M2 1l8 10M10 1L2 11" stroke="#333" strokeWidth="5" />
            <path d="M2 1l8 10M10 1L2 11" stroke="#fff" strokeWidth="3" />
          </svg>
        </button>
      </div>
    </header>
  );
}

// ==========================================================================
// Side bar and canvas
// ==========================================================================

const sideItems: Tool[] = [
  t('cloud', '云盘'),
  t('gallery', '图库'),
  t('compass', '图例'),
  t('fillArea', '填充'),
  t('convert', '转换'),
  t('house', '家装'),
  t('electric', '弱电'),
  t('tree', '园林'),
  t('cost', '造价'),
  t('tools', '工具'),
  t('mail', '反馈'),
];

function SideBar() {
  return (
    <aside className="flex w-[50px] shrink-0 flex-col overflow-hidden border-x border-[#3fa56f] bg-[#f2f2f2]">
      <div className="h-3 shrink-0 bg-linear-to-b from-[#1f8050] to-[#1b6b48]" />
      <div className="flex flex-col items-center gap-2 pt-3 pr-0.5">
        {sideItems.map((s) => (
          <button key={s.label} className="flex flex-col items-center gap-[3px] text-[14px] leading-5 text-[#222]">
            <span className="flex h-[26px] w-[26px] items-center justify-center rounded-[3px] border border-[#bcbcbc] bg-linear-to-b from-[#fafafa] to-[#ececec]">
              <Ico>{icons[s.icon]}</Ico>
            </span>
            {s.label}
          </button>
        ))}
      </div>
    </aside>
  );
}

const navPaths = ['M2 1v12M11 1v12L4 7z', 'M9 1v12L3 7z', 'M5 1v12l6-6z', 'M12 1v12M3 1v12l7-6z'];
const navLabels = ['首页', '上一页', '下一页', '末页'];

const layoutTabs = [
  { name: '模型', width: 'w-[78px]', edge: 'bg-[#8a8a8a]', tone: 'bg-white' },
  { name: 'Layout1', width: 'w-[77px]', edge: 'bg-[#777777]', tone: 'bg-[#b4b4b4]' },
  { name: 'Layout2', width: 'w-[78px]', edge: 'bg-[#777777]', tone: 'bg-[#b4b4b4]' },
];

function LayoutTabs() {
  return (
    <div className="flex h-[19px] shrink-0 border-t border-[#777] bg-[#c9d3df]">
      {navPaths.map((d, i) => (
        <button key={d} aria-label={navLabels[i]} className="mr-0.5 flex h-[17px] w-[17px] items-center justify-center border border-[#999] bg-[#f4f4f4]">
          <svg className="h-3 w-3" viewBox="0 0 14 14" fill="#8a8a8a" stroke="#8a8a8a" aria-hidden="true"><path d={d} /></svg>
        </button>
      ))}
      {layoutTabs.map((tab) => (
        <div key={tab.name} className={`flex h-[18px] justify-center [clip-path:polygon(0_0,100%_0,calc(100%-9px)_100%,9px_100%)] ${tab.width} ${tab.edge}`}>
          <button className={`h-[17px] w-[98%] text-[14px] leading-[18px] text-[#222] [clip-path:polygon(0_0,100%_0,calc(100%-9px)_100%,9px_100%)] ${tab.tone}`}>
            {tab.name}
          </button>
        </div>
      ))}
    </div>
  );
}

function Canvas() {
  return (
    <main className="relative flex-1 bg-black">
      {/* Pointer highlight */}
      <svg className="absolute top-[433px] left-[902px] h-[72px] w-[72px]" viewBox="0 0 72 72" fill="none" aria-hidden="true">
        <circle cx="36" cy="36" r="26.5" stroke="#b4b400" strokeWidth="18" />
        <path d="M34.500 20v29M20 34.500h29" stroke="#fff" strokeWidth="2.5" />
      </svg>
    </main>
  );
}

// ==========================================================================
// Status bar and taskbar
// ==========================================================================

function AppLogo({ className }: { className: string }) {
  return (
    <svg className={className} viewBox="0 0 46 46" aria-hidden="true">
      <path d="M3 5q0-5 5-5h33q5 0 5 5v16L18 40 3 30z" fill="#f5c400" />
      <path d="M18 40L46 16v22q0 5-5 5H16z" fill="#7db928" />
      <path d="M0 20l12 16 14-8-8 18H5q-5 0-5-5z" fill="#c8202c" />
      <path d="M13 31L38 12" stroke="#b86a28" strokeWidth="9" strokeLinecap="round" />
      <path d="M13 30L38 11" stroke="#f4b070" strokeWidth="6" strokeLinecap="round" />
      <path d="M1 22l8 10 2 7 7-5" stroke="#fff" strokeWidth="3" fill="none" />
    </svg>
  );
}

function StatusBar() {
  return (
    <div className="flex h-[30px] shrink-0 items-center border-t-2 border-b-2 border-t-[#5fae84] border-b-[#999999] bg-[#e0e0e0] pr-3 pl-2.5">
      <AppLogo className="h-[22px] w-[23px]" />
      <span className="w-[106px] pl-1.5 text-[15px] whitespace-nowrap text-[#7a7a7a]">CAD迷你画图</span>
      <button className="flex h-[23px] w-[101px] items-center justify-center gap-0.5 border border-[#999] bg-linear-to-b from-[#f0f0f0] to-[#d6d6d6] text-[14px] whitespace-nowrap text-[#666]">
        <svg className="h-3 w-3" viewBox="0 0 12 12" fill="#444" aria-hidden="true"><path d="M8 0L1 7h4l-3 5 9-7H7l3-5z" /></svg>
        快捷命令表
      </button>
      <div className="ml-3 flex h-[21px]">
        <input aria-label="快捷命令" placeholder="输入快捷命令" className="w-[297px] border border-[#8a8a8a] bg-[#eeeeee] pl-0.5 text-[17px] leading-[18px] placeholder:text-[#999]" />
        <button className="w-[87px] border border-l-0 border-[#8a8a8a] bg-[#cccccc] text-[14px] leading-[18px] text-[#222]">确定</button>
      </div>
      <div className="ml-auto flex h-[21px]">
        <input aria-label="查找文字" placeholder="查找文字" className="w-[139px] border border-[#8a8a8a] bg-[#eeeeee] pl-0.5 text-[17px] leading-[18px] placeholder:text-[#999]" />
        <button aria-label="查找" className="flex w-8 items-center justify-center border border-l-0 border-[#8a8a8a] bg-[#e4e4e4]">
          <svg className="h-4 w-4" viewBox="0 0 16 16" fill="none" stroke="#777" aria-hidden="true"><circle cx="6.5" cy="6.5" r="5" strokeWidth="1.5" /><path d="M10 10l5 5" strokeWidth="2.6" /></svg>
        </button>
      </div>
      <div className="ml-2.5 flex items-center gap-2">
        <button aria-label="正交"><Ico><path d="M1 0v19h19M1 11h8v8" stroke="#777" strokeWidth={1.6} /></Ico></button>
        <button aria-label="捕捉" className="flex h-[26px] w-[26px] items-center justify-center rounded-[2px] border border-[#d99a3c] bg-[#f7c675]">
          <Ico>
            <path d="M3 1h14v14H3z" fill="#fff" stroke="#555" />
            <path d="M5 4v9h7z" fill="#888" stroke="none" />
            <path d="M0 18h20" stroke="#222" strokeWidth={2} />
          </Ico>
        </button>
        <button aria-label="十字光标" className="mr-1 ml-1"><Ico><path d="M10 3v14M3 10h14" strokeWidth={2.2} stroke="#555" /></Ico></button>
        <button aria-label="颜色"><ColorWheel /></button>
        <button aria-label="视图" className="ml-1">
          <Ico>
            <circle cx="10" cy="10" r="6" stroke="#777" strokeWidth={1.7} />
            <path d="M5 13q-6 5-3 4 5 0 11-5t6-9-8 1" stroke="#777" strokeWidth={1.5} />
          </Ico>
        </button>
      </div>
    </div>
  );
}

// The lower part of the taskbar runs off the bottom of the screen
function Taskbar() {
  return (
    <footer className="flex h-[25px] shrink-0 items-start overflow-hidden bg-[linear-gradient(90deg,#a9a6aa_0_5%,#d6d4d7_15%,#dcdadd_40%,#d8d6d9_58%,#a5a2a6_61%,#aaa7ab_100%)]">
      <button aria-label="开始" className="flex h-10 w-[85px] shrink-0 justify-center pt-0.5 pr-1">
        <svg className="h-[50px] w-[50px]" viewBox="0 0 50 50" aria-hidden="true">
          <defs>
            <linearGradient id="orb" x2="0" y2="1">
              <stop offset="0" stopColor="#b4d4e4" />
              <stop offset=".5" stopColor="#2f6c98" />
            </linearGradient>
          </defs>
          <circle cx="25" cy="25" r="24" fill="url(#orb)" stroke="#2f6580" strokeWidth="1.5" />
          <path d="M14 13q6-4 11-1l-3 12q-5-3-11 0z" fill="#e8683c" />
          <path d="M27 13q5 3 11 0l-3 12q-6 3-11 0z" fill="#86c440" />
        </svg>
      </button>
      <button aria-label="OBS" className="flex h-10 w-[79px] shrink-0 justify-center border border-b-0 border-[#888] bg-linear-to-r from-[#e4e3e5] to-[#d2d0d3] pt-[5px]">
        <svg className="h-11 w-11" viewBox="0 0 44 44" aria-hidden="true">
          <circle cx="22" cy="22" r="22" fill="#0c0c0c" />
          <path d="M20 3q-9 5-4 12 4 5 12 3M28 18q5-5 11-2M13 11q-8 4-7 12" fill="none" stroke="#eee" strokeWidth="2.4" />
        </svg>
      </button>
      <button aria-label="CAD迷你画图" className="ml-1 flex h-10 w-20 shrink-0 justify-center border border-b-0 border-[#888] bg-[#ecebed] pt-1">
        <AppLogo className="h-[50px] w-[50px]" />
      </button>
      <div className="ml-auto flex h-10 shrink-0 items-start text-white">
        <span className="w-[29px] pt-[15px] font-['Liberation_Serif',serif] text-[16px] leading-6">CH</span>
        <svg className="mt-3 mr-3 h-[22px] w-[22px]" viewBox="0 0 22 22" aria-hidden="true"><path d="M0 4L19 0l3 20H3z" fill="#ee6436" /><path d="M17 6q-9-2-10 2t8 4 0 7" fill="none" stroke="#fff" strokeWidth="3" /></svg>
        <svg className="mt-3 mr-3 h-5 w-5" viewBox="0 0 20 20" aria-hidden="true"><circle cx="10" cy="10" r="10" fill="#1a1f9c" /><path d="M6 8q0-4 4-4t4 3-4 5v2" fill="none" stroke="#fff" strokeWidth="2.4" /></svg>
        <svg className="mt-3 mr-[15px] h-2.5 w-2.5" viewBox="0 0 10 10" fill="none" stroke="#fff" strokeWidth="1.3" aria-hidden="true"><path d="M4 1h5v4H7M1 4h6v4H1z" /></svg>
        <svg className="mt-[17px] mr-3.5 h-5 w-5" viewBox="0 0 20 20" aria-hidden="true"><circle cx="10" cy="10" r="9.5" fill="#0c0c0c" stroke="#ddd" /><path d="M9 3q-3 3 0 5t5 0" fill="none" stroke="#ccc" /></svg>
        <svg className="mt-4 mr-4 h-6 w-6" viewBox="0 0 24 24" aria-hidden="true"><rect width="24" height="24" rx="3" fill="#222" /><circle cx="12" cy="12" r="9" fill="none" stroke="#e4b428" strokeWidth="2" /></svg>
        <svg className="mt-[21px] mr-5 h-3 w-3" viewBox="0 0 12 12" fill="none" stroke="#eee" strokeWidth="2" aria-hidden="true"><circle cx="6" cy="6" r="5" /></svg>
        <svg className="mt-[17px] mr-3.5 h-5 w-[22px]" viewBox="0 0 22 20" fill="#f4f4f4" stroke="#555" aria-hidden="true"><path d="M1 1h3v18H1zM4 1h8v3h9v12H10l-6-4z" /></svg>
        <svg className="mt-[17px] mr-4 h-5 w-5" viewBox="0 0 20 20" aria-hidden="true"><path d="M10 0l10 4v12l-10 4L0 16V4z" fill="#e6f2dc" /><path d="M3 6q7-6 14 0v8l-7 3-7-3z" fill="#57a83a" /><path d="M6 8l8-2" stroke="#fff" strokeWidth="2" /></svg>
        <svg className="mt-4 mr-3 h-5 w-5" viewBox="0 0 20 20" fill="#9a9a9a" stroke="#eee" aria-hidden="true"><path d="M10 1l9 9-9 9-9-9z" /></svg>
        <svg className="mt-4 mr-4 h-6 w-6" viewBox="0 0 24 24" aria-hidden="true"><circle cx="12" cy="12" r="12" fill="#d8e820" /><path d="M8 1q12-1 15 10-6-6-15-10z" fill="#2c8a28" /><circle cx="8" cy="9" r="2" fill="#222" /><path d="M13 9h5" stroke="#222" strokeWidth="2" /></svg>
        <svg className="mt-[17px] mr-4 h-5 w-4" viewBox="0 0 16 20" fill="#777" stroke="#eee" strokeWidth="1.5" aria-hidden="true"><path d="M5 1h6v2h3v16H2V3h3zM4 7h8" /></svg>
        <svg className="mt-[17px] mr-5 h-5 w-6" viewBox="0 0 24 20" fill="#f6f6f6" stroke="#f6f6f6" aria-hidden="true"><path d="M1 7h5l6-6v18l-6-6H1z" /><path d="M16 4q4 6 0 12M19 2q6 8 0 16" fill="none" strokeWidth="1.5" /></svg>
        <svg className="mt-[19px] mr-6 h-4 w-3" viewBox="0 0 12 16" fill="#777" stroke="#555" aria-hidden="true"><path d="M8 1h3v14H8zM4 5h3v10H4zM1 9h2v6H1z" /></svg>
        <span className="mt-[11px] mr-[43px] flex h-8 w-8 justify-center rounded-full border-[3px] border-[#2ec47c] pt-1 text-[15px] leading-5">51</span>
        <time className="w-[81px] pt-1 text-[18px] leading-6">17:14</time>
        <button aria-label="显示桌面" className="mr-px h-10 w-4 border-x border-[#777] bg-linear-to-r from-[#8a888b] to-[#b4b2b5]" />
      </div>
    </footer>
  );
}

export default function App() {
  return (
    <div className="h-screen overflow-hidden bg-black pt-[42px] pr-[113px] pl-24 font-['Noto_Sans','Noto_Sans_CJK_SC',sans-serif]">
      <div className="flex h-full flex-col">
        <TitleBar />
        <Ribbon />
        <div className="flex min-h-0 flex-1">
          <SideBar />
          <div className="flex min-w-0 flex-1 flex-col">
            <Canvas />
            <LayoutTabs />
          </div>
        </div>
        <StatusBar />
        <Taskbar />
      </div>
    </div>
  );
}
